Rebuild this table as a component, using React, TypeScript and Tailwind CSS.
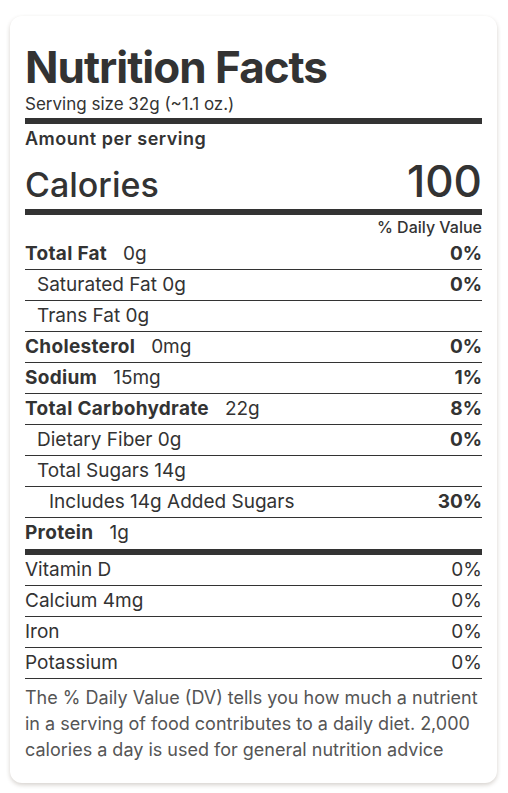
import React from "react";

type Row = { label: string; amount?: string; dv?: string; bold?: boolean; indent?: 0 | 1 | 2 };

const rows: Row[] = [
  { label: "Total Fat", amount: "0g", dv: "0%", bold: true },
  { label: "Saturated Fat 0g", dv: "0%", indent: 1 },
  { label: "Trans Fat 0g", indent: 1 },
  { label: "Cholesterol", amount: "0mg", dv: "0%", bold: true },
  { label: "Sodium", amount: "15mg", dv: "1%", bold: true },
  { label: "Total Carbohydrate", amount: "22g", dv: "8%", bold: true },
  { label: "Dietary Fiber 0g", dv: "0%", indent: 1 },
  { label: "Total Sugars 14g", indent: 1 },
  { label: "Includes 14g Added Sugars", dv: "30%", indent: 2 },
];

const vitamins = [
  ["Vitamin D", "0%"],
  ["Calcium 4mg", "0%"],
  ["Iron", "0%"],
  ["Potassium", "0%"],
];

export default function App() {
  return (
    <div className="min-h-[793px] bg-white pt-[16px] px-[10px] text-[#333]" style={{ fontFamily: "Inter, 'Noto Sans', sans-serif" }}>
      <div className="w-[487px] rounded-[12px] bg-white px-[15px] pt-[25px] pb-[20px] shadow-[0_2px_4px_rgba(70,50,30,0.22)]">
        <h1 className="text-[44px] font-bold leading-[52px] tracking-[-1px]">Nutrition Facts</h1>
        <div className="text-[17px] leading-[22px]">Serving size 32g (~1.1 oz.)</div>
        <div className="h-[6px] bg-[#333] mt-[3px]" />
        <div className="text-[18px] font-semibold leading-[24px] tracking-[0.5px] mt-[3px]">Amount per serving</div>
        <div className="flex items-baseline justify-between mt-[8px]">
          <span className="text-[34px] font-medium leading-[34px]">Calories</span>
          <span className="text-[44px] font-medium leading-[44px]">100</span>
        </div>
        <div className="h-[6px] bg-[#333] mt-[6px]" />
        <div className="text-right text-[16px] leading-[24px] font-medium">% Daily Value</div>
        {rows.map((r, i) => (
          <div
            key={i}
            className={`flex h-[31px] items-center justify-between border-b border-[#333] text-[19px] ${
              r.indent === 1 ? "pl-[12px]" : r.indent === 2 ? "pl-[24px]" : ""
            }`}
          >
            <span>
              {r.bold ? <span className="font-bold tracking-[0.3px]">{r.label}</span> : r.label}
              {r.amount ? <span className="ml-[16px]">{r.amount}</span> : null}
            </span>
            {r.dv ? <span className="font-bold">{r.dv}</span> : null}
          </div>
        ))}
        <div className="flex h-[31px] items-center text-[19px]">
          <span className="font-bold tracking-[0.3px]">Protein</span>
          <span className="ml-[16px]">1g</span>
        </div>
        <div className="h-[6px] bg-[#333]" />
        {vitamins.map(([l, v], i) => (
          <div key={i} className="flex h-[31px] items-center justify-between border-b border-[#333] text-[19px]">
            <span>{l}</span>
            <span>{v}</span>
          </div>
        ))}
        <p className="mt-[6px] text-[18px] leading-[26px] text-[#555]">
          The % Daily Value (DV) tells you how much a nutrient in a serving of food contributes to a daily diet. 2,000 calories a day is used for general nutrition advice
        </p>
      </div>
    </div>
  );
}
